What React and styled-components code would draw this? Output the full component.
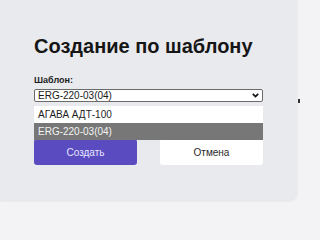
import React from 'react';
import styled, { createGlobalStyle } from 'styled-components';

const GlobalStyle = createGlobalStyle`
    html, body {
        margin: 0;
        padding: 0;
        background: #f3f3f5;
        overflow: hidden;
    }
`;

const Page = styled.div`
    position: relative;
    display: flow-root;
    width: 300px;
    height: 203px;
    font-family: 'Liberation Sans', Arial, sans-serif;
`;

const Panel = styled.div`
    position: relative;
    margin: -8px 0 0 -6px;
    width: 303px;
    height: 208px;
    box-sizing: border-box;
    padding: 43px 0 0 40px;
    background: #e9eaee;
    border-radius: 8px;
    box-shadow: 0 1px 3px rgba(0, 0, 0, 0.08);
`;

const Title = styled.h1`
    margin: 0;
    font-size: 20px;
    line-height: 23px;
    font-weight: 700;
    color: #161616;
`;

const Label = styled.div`
    margin-top: 17px;
    font-size: 9px;
    line-height: 11px;
    font-weight: 700;
    color: #1c1c1c;
`;

const Select = styled.div`
    margin-top: 3px;
    width: 229px;
    height: 13px;
    box-sizing: border-box;
    display: flex;
    align-items: center;
    justify-content: space-between;
    padding: 0 3px 0 3px;
    background: #fff;
    border: 1px solid #6a6a6a;
    border-radius: 2px;
    font-size: 10px;
    color: #1a1a1a;
`;

const Buttons = styled.div`
    margin-top: 37px;
    display: flex;
    gap: 23px;
`;

const Button = styled.div`
    width: 103px;
    height: 26px;
    display: flex;
    align-items: center;
    justify-content: center;
    font-size: 10px;
    border-radius: 3px;
    background: ${(p) => (p.$primary ? '#5a4bc1' : '#ffffff')};
    color: ${(p) => (p.$primary ? '#e8e6ff' : '#2a2a2a')};
`;

const Options = styled.div`
    position: absolute;
    top: 114px;
    left: 40px;
    width: 229px;
`;

const Option = styled.div`
    height: 17px;
    display: flex;
    align-items: center;
    padding-left: 4px;
    font-size: 10px;
    background: ${(p) => (p.$active ? '#777777' : '#ffffff')};
    color: ${(p) => (p.$active ? '#f4f4f4' : '#1e1e1e')};
`;

const EdgeMark = styled.div`
    position: absolute;
    right: 0;
    top: 99px;
    width: 2px;
    height: 4px;
    background: #333;
`;

const Chevron = () => (
    <svg width="7" height="5" viewBox="0 0 7 5">
        <polyline points="0.8,0.8 3.5,3.6 6.2,0.8" fill="none" stroke="#111" strokeWidth="1.7" />
    </svg>
);

export default function App() {
    return (
        <Page>
            <GlobalStyle />
            <Panel>
                <Title>Создание по шаблону</Title>
                <Label>Шаблон:</Label>
                <Select>
                    <span>ERG-220-03(04)</span>
                    <Chevron />
                </Select>
                <Buttons>
                    <Button $primary>Создать</Button>
                    <Button>Отмена</Button>
                </Buttons>
                <Options>
                    <Option>АГАВА АДТ-100</Option>
                    <Option $active>ERG-220-03(04)</Option>
                </Options>
            </Panel>
            <EdgeMark />
        </Page>
    );
}
